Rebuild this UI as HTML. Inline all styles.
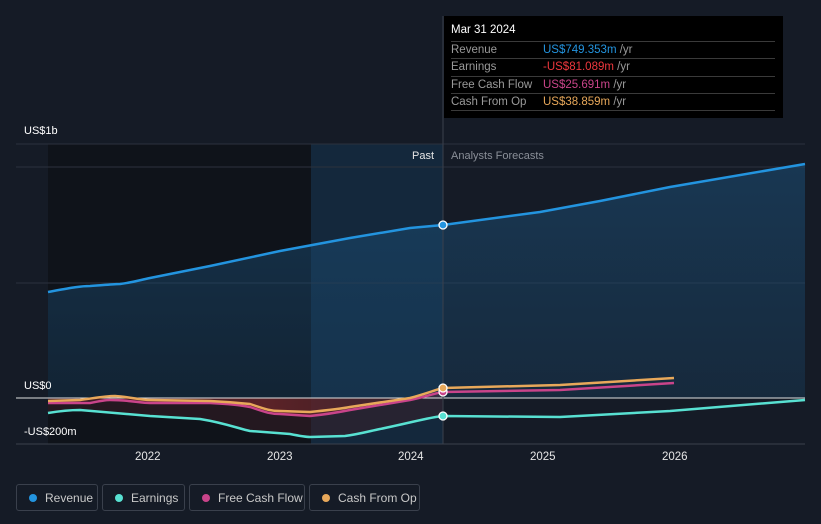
<!DOCTYPE html><html><head><style>
body{margin:0;width:821px;height:524px;background:#151b26;font-family:"Liberation Sans",sans-serif;overflow:hidden;position:relative}
.t{position:absolute;font-size:11px;color:#fff}
.ax{position:absolute;top:451px;font-size:11.5px;color:#e6e6e6}
.tip{position:absolute;left:444px;top:16px;width:339px;height:102px;background:#000;}
.tip .h{position:absolute;left:7px;top:8px;color:#fff;font-size:11.5px}
.row{position:absolute;left:7px;width:324px;height:17px;border-top:1px solid #3a3a3a;font-size:11.5px;color:#9a9a9a;line-height:17px}
.row b{font-weight:normal;position:absolute;left:92px}
.row i{font-style:normal;color:#9a9a9a}
.leg{position:absolute;top:484px;height:27px;border:1px solid #3a404c;border-radius:3px;font-size:12px;color:#c8c8c8;line-height:26px;box-sizing:border-box}
.leg:before{content:"";position:absolute;left:12px;top:9px;width:8px;height:8px;border-radius:50%;background:var(--c)}
</style></head><body>
<svg width="821" height="524" style="position:absolute;left:0;top:0">
<defs>
<linearGradient id="rg" x1="0" y1="0" x2="0" y2="1"><stop offset="0" stop-color="#1a4a70" stop-opacity=".6"/><stop offset="1" stop-color="#1a4a70" stop-opacity=".3"/></linearGradient>
<linearGradient id="eg" x1="0" y1="0" x2="1" y2="0"><stop offset="0" stop-color="#6a1e24" stop-opacity=".6"/><stop offset=".55" stop-color="#9a2e2e" stop-opacity=".8"/><stop offset="1" stop-color="#8a2a2a" stop-opacity=".25"/></linearGradient>
</defs>
<rect x="48" y="144" width="263" height="300" fill="#0f131a"/>
<rect x="311" y="144" width="132" height="300" fill="#14283c"/>
<line x1="16" y1="144" x2="805" y2="144" stroke="#2c323d"/>
<line x1="16" y1="167" x2="805" y2="167" stroke="#2c323d"/>
<line x1="16" y1="283" x2="805" y2="283" stroke="#2c323d"/>
<line x1="16" y1="444" x2="805" y2="444" stroke="#3a404c"/>
<path d="M48,292 C70,288 80,286 90,286 C105,285 115,284 120,284 C135,282 140,280 150,278 L210,266 L280,251 L350,238 L410,228 L443,225 L540,212 L600,201 L670,187 L805,164 L805,398 L48,398Z" fill="url(#rg)"/>
<path d="M48,403 L110,400 L150,403 L210,403 L250,407 L280,414 L310,416 L350,410 L410,400 L443,392 L443,398 L48,398Z" fill="url(#eg)"/>
<path d="M48,413 L80,410 L150,416 L200,419 C225,423 240,429 250,431 L290,434 L310,437 L345,436 L380,429 L443,416 L443,398 L48,398Z" fill="#3a1e26" opacity=".5"/>
<line x1="16" y1="398" x2="805" y2="398" stroke="#e0e0e0" stroke-width="1"/>
<line x1="443" y1="16" x2="443" y2="444" stroke="#3a404c"/>
<path d="M48,292 C70,288 80,286 90,286 C105,285 115,284 120,284 C135,282 140,280 150,278 L210,266 L280,251 L350,238 L410,228 L443,225 L540,212 L600,201 L670,187 L805,164" fill="none" stroke="#2394df" stroke-width="2.5"/>
<path d="M48,413 C60,411 70,410 80,410 L150,416 L200,419 C225,423 240,429 250,431 L290,434 C300,436 305,437 310,437 L345,436 C360,434 370,431 380,429 C410,423 430,417 443,416 L560,417 L670,411 L805,400" fill="none" stroke="#58e1d2" stroke-width="2.5"/>
<path d="M48,403 L90,403 C100,401 105,400 110,400 C130,400 140,403 150,403 L210,403 C230,404 240,405 250,407 C265,412 270,414 280,414 L310,416 C330,414 340,412 350,410 L410,400 C425,397 435,393 443,392 L560,390 L674,383" fill="none" stroke="#c9448a" stroke-width="2.5"/>
<path d="M48,401 L80,400 C95,398 105,396 115,396 C130,397 140,400 150,400 L210,401 C230,402 240,403 250,404 C265,409 270,411 280,411 L310,412 C330,410 340,409 350,407 L410,398 C425,394 435,390 443,388 L560,385 L674,378" fill="none" stroke="#e8a85a" stroke-width="2.5"/>
<circle cx="443" cy="225" r="4" fill="#2394df" stroke="#fff" stroke-width="1.3"/>
<circle cx="443" cy="416" r="4" fill="#58e1d2" stroke="#fff" stroke-width="1.3"/>
<circle cx="443" cy="392" r="4" fill="#c9448a" stroke="#fff" stroke-width="1.3"/>
<circle cx="443" cy="388" r="4" fill="#e8a85a" stroke="#fff" stroke-width="1.3"/>
</svg>
<div class="t" style="left:24px;top:125px">US$1b</div>
<div class="t" style="left:24px;top:380px">US$0</div>
<div class="t" style="left:24px;top:426px">-US$200m</div>
<div class="t" style="left:412px;top:150px;color:#e6e6e6">Past</div>
<div class="t" style="left:451px;top:150px;color:#8a8f98">Analysts Forecasts</div>
<div class="ax" style="left:135px">2022</div>
<div class="ax" style="left:267px">2023</div>
<div class="ax" style="left:398px">2024</div>
<div class="ax" style="left:530px">2025</div>
<div class="ax" style="left:662px">2026</div>
<div class="tip"><div class="h">Mar 31 2024</div>
<div class="row" style="top:25px">Revenue<b><span style="color:#2394df">US$749.353m</span> <i>/yr</i></b></div>
<div class="row" style="top:42px">Earnings<b><span style="color:#f0383e">-US$81.089m</span> <i>/yr</i></b></div>
<div class="row" style="top:60px">Free Cash Flow<b><span style="color:#c9448a">US$25.691m</span> <i>/yr</i></b></div>
<div class="row" style="top:77px">Cash From Op<b><span style="color:#e8a85a">US$38.859m</span> <i>/yr</i></b></div>
<div style="position:absolute;left:7px;top:94px;width:324px;border-top:1px solid #3a3a3a"></div>
</div>
<div class="leg" style="left:16px;width:82px;--c:#2394df;padding-left:28px">Revenue</div>
<div class="leg" style="left:102px;width:83px;--c:#58e1d2;padding-left:28px">Earnings</div>
<div class="leg" style="left:189px;width:116px;--c:#c9448a;padding-left:28px">Free Cash Flow</div>
<div class="leg" style="left:309px;width:111px;--c:#e8a85a;padding-left:28px">Cash From Op</div>
</body></html>
